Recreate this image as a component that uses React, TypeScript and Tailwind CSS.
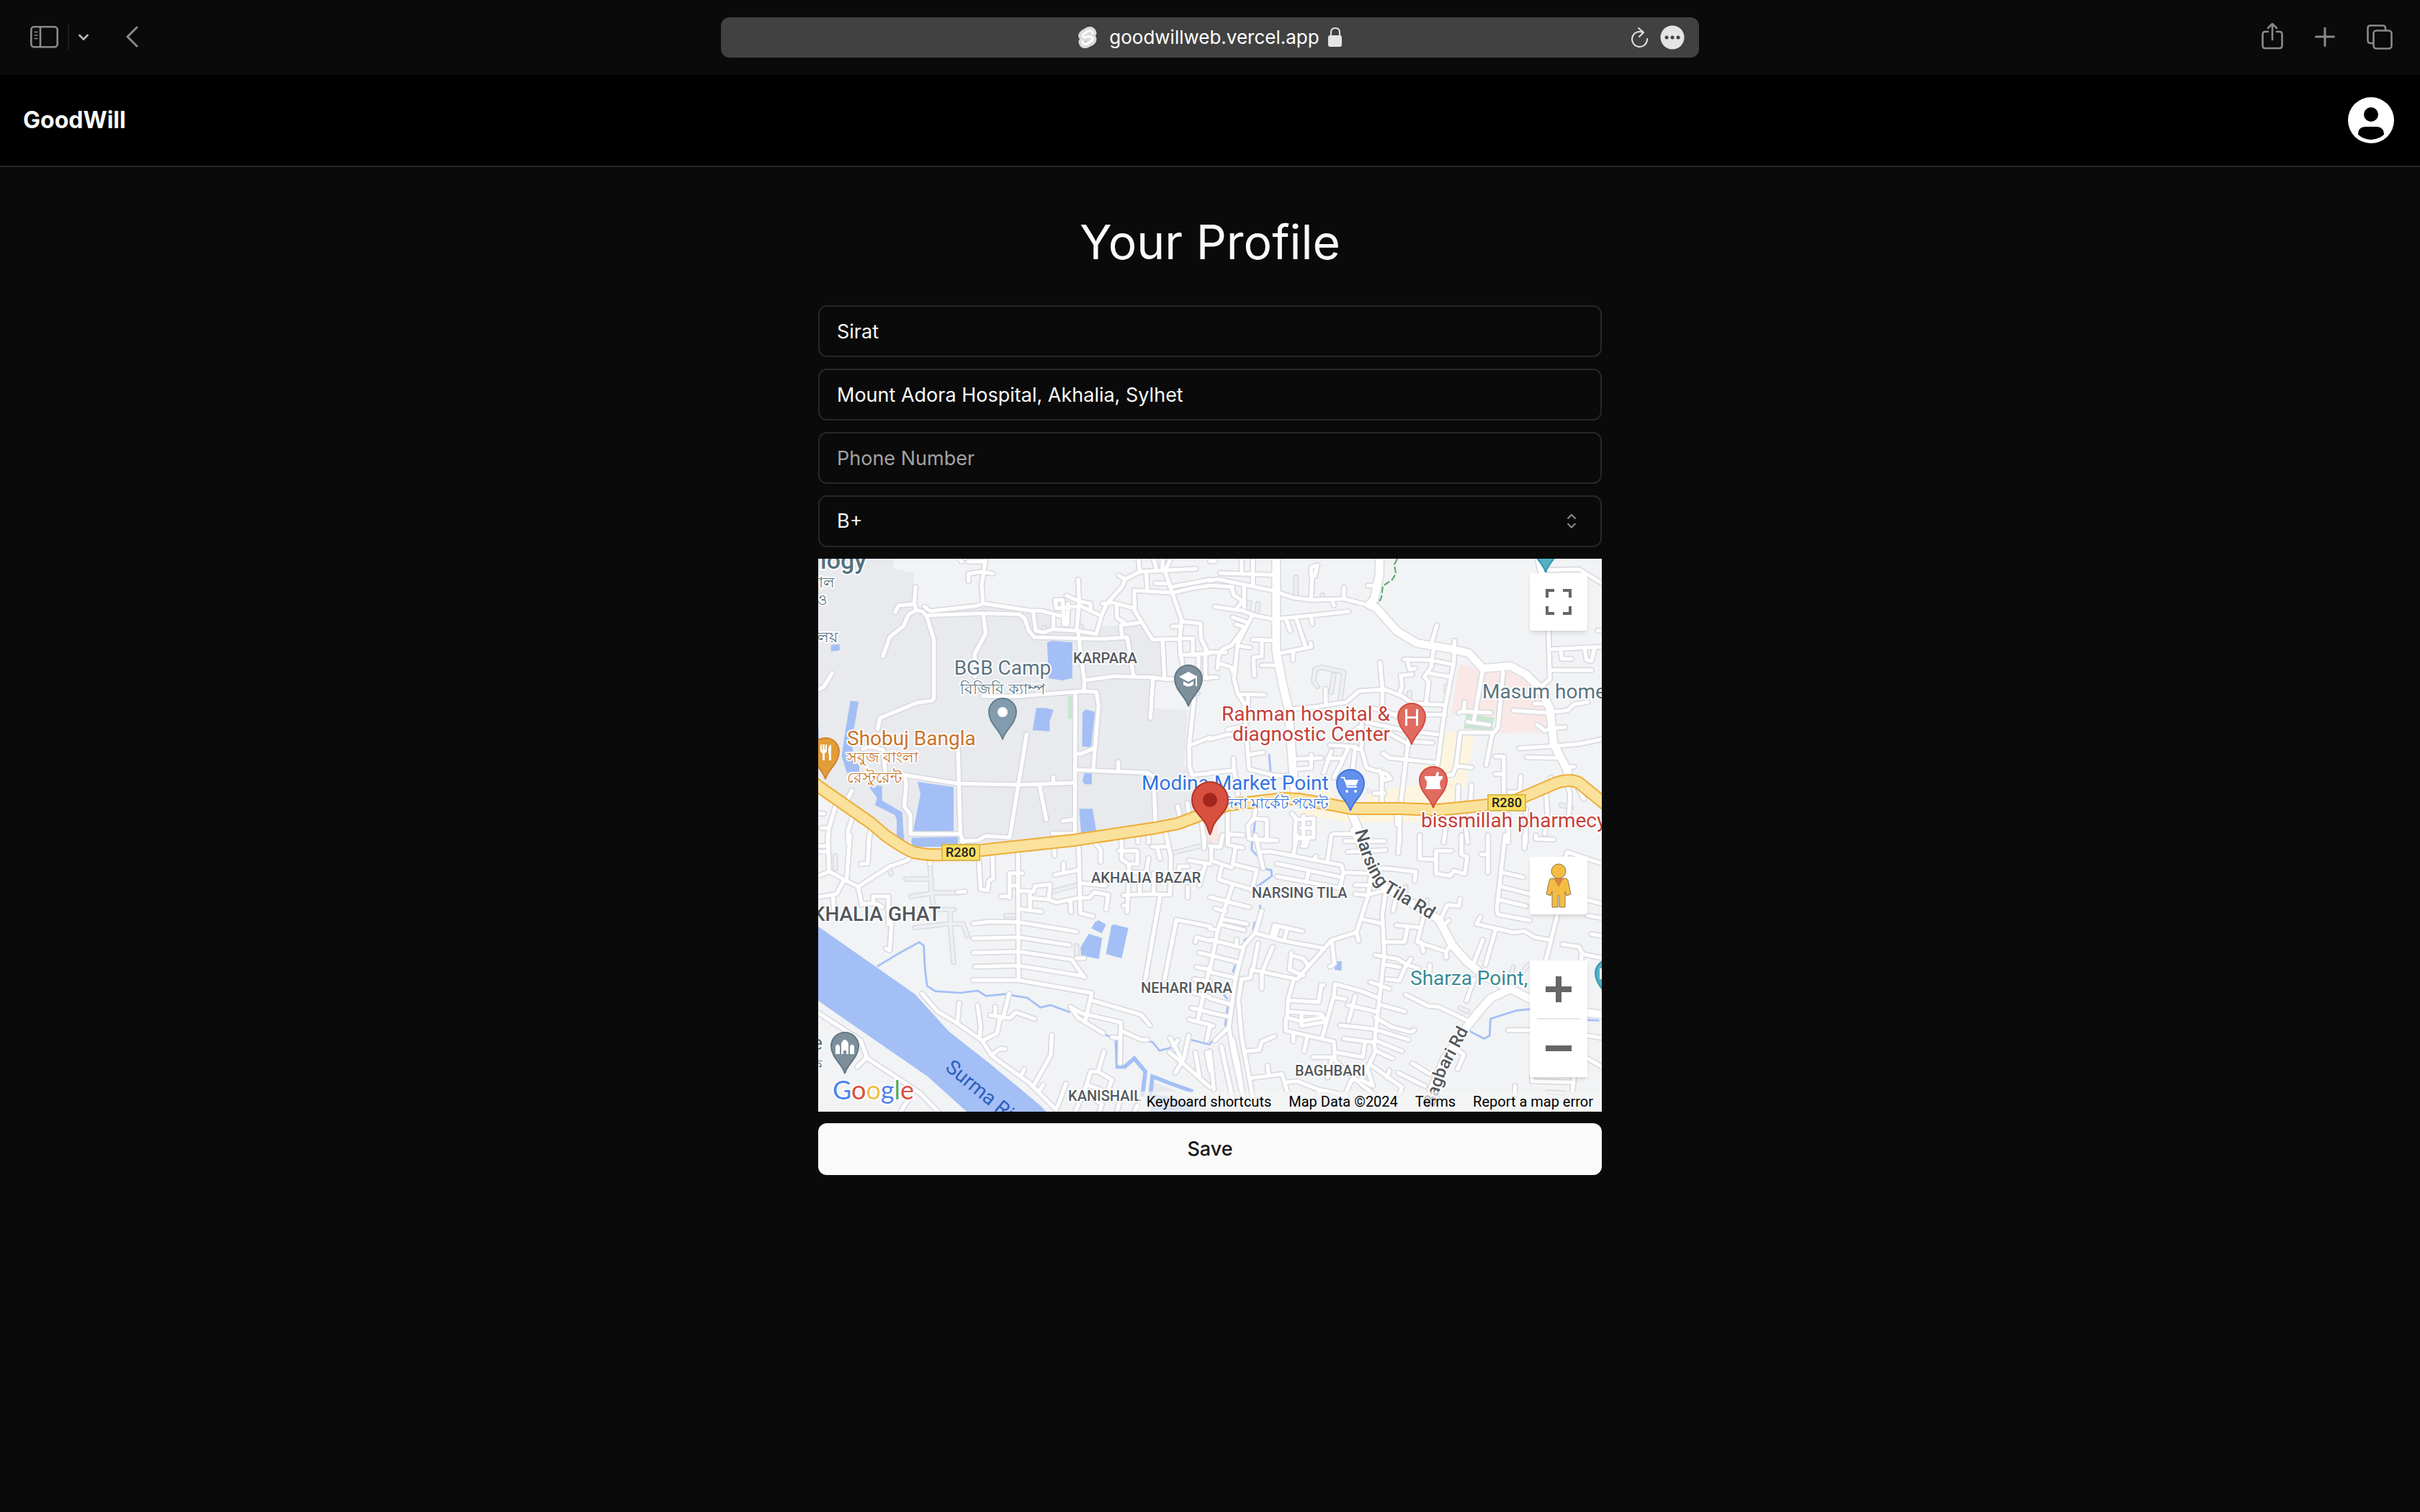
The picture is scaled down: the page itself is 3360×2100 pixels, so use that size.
import { useState } from 'react'
import type { ReactNode } from 'react'

const bloodGroups = ['A+', 'A-', 'B+', 'B-', 'AB+', 'AB-', 'O+', 'O-']

interface Tile {
  transform: string
  land?: string
  pink?: string
  sand?: string
  park?: string
  water: string
  stream?: string
  creek?: string
  faint?: string
  minor: string
  major?: string
}

// The map is cut in four tiles, each drawn in its own coordinates
const tiles: Tile[] = [
  {
    transform: 'translate(-6 -6) scale(0.3508 0.3333)',
    land: 'M17 18H315V60L397 76L392 205L460 235L660 210L860 240L950 260V315L1110 330L1140 300L1215 295L1285 290L1340 355L1380 365L1385 515L1350 535L1345 642L1480 648L1465 880L1500 920L1568 930V1080L1390 1140L760 1200H340L17 960Z',
    pink: 'M1545 1120H1568V1200H1550Z',
    park: 'M1006 590H1022V687H1006Z',
    water:
      'M923 368L940 360L1023 367V515L985 525L930 517Z M68 378L102 374V400L68 404Z M145 610L177 614L150 780L160 860L180 880V905L130 910L110 840L125 730Z M225 960L270 965V1025L350 1075L357 1200H328V1105L320 1085L242 1045L250 1015L222 975Z M410 947L553 970V1152L392 1158L422 1000Z M388 1182L570 1177V1200H385Z M880 640H918L949 648L933 695V737L866 733Z M1063 658L1078 646L1112 656L1097 803L1062 800Z M1070 912H1100V958H1072L1063 945Z M1050 1060H1103L1118 1155L1058 1163Z M17 690L22 790H17Z',
    faint: 'M912 305V325 M1058 300V320 M1505 580H1520',
    minor:
      'M577 18L585 30 M612 30H670 M680 18L664 130L670 205 M708 80L667 72L612 80V112 M402 135L398 205L405 232 M322 240L335 213L398 207 M438 218L460 236L640 215L672 205L860 235H900L990 260 M405 232L375 250L355 298L300 345L273 425 M405 232L430 238L448 262L475 355V600L467 610L408 618L262 682L252 728 M448 254L670 245L815 250L835 268L850 318L872 345L1150 352L1240 345L1265 505 M670 245L680 330L637 412V510 M1046 105L1050 190L1040 320 M1000 172L1050 195L1095 205V235 M955 190H985L990 292H1003L1006 205 M955 190L960 225L1055 215L1135 255 M868 240L878 318L910 325L945 312L1045 318L1118 332L1140 250L1160 205L1220 135L1232 103L1290 72L1512 60 M948 262V312 M1207 88L1232 103 M1285 18L1290 72 M1345 18L1355 60 M1380 18V70 M1412 18L1390 70L1415 150L1455 270L1448 350L1450 400L1465 500 M1352 120L1405 122 M1315 75L1320 150 M1268 150L1420 160L1500 140L1568 130 M1420 135L1568 105 M1268 150L1270 235L1340 355L1448 352 M1142 205L1180 200L1270 225 M1198 205L1200 265L1228 282L1215 298L1220 345 M1215 295L1285 285 M1380 360L1388 518 M1460 280L1530 288L1532 350L1555 400 M1420 300H1455 M1450 350H1500V420 M1450 420L1568 412 M1046 325L1070 525V570 M1070 525L1185 508L1340 512L1390 520L1568 515 M1342 515L1332 682 M670 590L800 592L1065 570L1118 573L1127 630L1105 900 M1035 580L1033 1175 M1040 832L1060 830L1108 808 M1040 898L1320 910L1345 925L1352 1130 M1205 865V905 M842 750L775 1180L680 1173L650 1192L585 1195 M570 800L580 1165L592 1200 M330 915L570 955L820 960L1030 952 M948 928V955 M893 962L920 1105 M985 1110L1030 1105 M945 1163H1035 M360 920L365 960L358 1050L382 1085V1165H580 M17 565L40 550L72 495 M195 810L220 800L275 815L282 900 M1505 600L1485 800L1487 885L1498 920L1568 912 M1490 795L1568 762 M1440 1050L1450 1100 M1478 1035L1485 1085 M17 1080H40 M150 985L130 1025 M85 1050L60 1140L55 1200 M30 1140H60 M155 1090L135 1150V1200 M225 1150L215 1200 M1522 420V490 M1550 400V510 M1283 1175V1200 M1217 1180V1200 M1325 1170V1200 M1390 1150L1400 1200 M1535 1115L1545 1200',
  },
  {
    transform: 'translate(544 -6) scale(0.3508 0.3333)',
    land: 'M618 970L645 980V1020H618Z',
    pink: 'M988 455L1065 480L1040 640L1010 670L955 660Z M1085 490H1150L1130 690L1050 665Z M1165 485L1230 495L1300 560L1330 640L1345 740L1140 745Z M0 1100H25L40 1200H0Z',
    sand: 'M930 737L975 740L960 890L905 880Z M1000 755H1045L1015 950L960 1040H880L700 1030V980L830 960L840 880L900 870L985 900Z M440 950L520 1040H400Z M620 1000L700 990V1040H620Z M350 1060L740 1085H830V1115L560 1118L350 1080Z',
    park: 'M1015 665L1125 680L1115 732L1003 725Z',
    water: 'M0 0Z',
    stream: 'M234 832L240 910 M178 1112L172 1175',
    faint:
      'M425 550L410 530L415 480L440 470L530 490L515 610 M490 500L480 575 M340 95V185 M155 200L150 240 M190 205L185 250 M445 170V185 M935 550V570 M790 575V600 M1390 1045L1430 1055',
    minor:
      'M0 28H20 M125 18V75 M170 18V120 M40 78L245 85 M0 110L30 103L245 150L330 180L400 190L530 185L620 210 M0 130L90 135 M530 138V180 M425 45L415 90H400V55L415 48 M405 90L400 185 M85 140L95 170L130 195L105 225 M135 130V220 M20 218L130 235L180 255L250 270L400 255L548 238 M400 258L405 290 M300 268L318 320 M340 262L380 390 M285 410L400 385L398 370 M330 405L328 440 M485 195L490 212 M625 130H650 M165 258L110 370L95 520L110 580L135 620L150 830L155 895L250 920L320 925 M90 262L140 280 M103 292L130 300 M130 315L85 380L50 395L35 420L30 475 M0 408H62 M38 455L85 470L90 490 M108 380L158 388 M170 355L250 358 M205 358V425L172 430L175 505 M205 462H265 M0 512H28 M115 582L215 585 M150 590V630 M315 645L420 635L540 615L590 570L690 562L760 590L800 620L930 628 M673 450L682 555V640 M458 560V625 M768 438L875 440L965 460 M780 440L790 480L812 475 M800 500L755 505L760 550L750 580 M885 395L875 470L848 510L865 530L855 620 M868 495L950 510 M898 295L878 365 M968 360L965 450L930 640L900 880 M640 640L700 655L790 700 M720 665L930 668 M620 700L780 735L900 750 M700 740L785 790 M800 780L880 785 M790 740L775 860L755 1040L750 1125V1200 M685 830L710 848L895 868 M1160 490L1140 720L1125 742H990 M1078 490L1045 690 M1008 615L1005 650L985 660 M1005 655L1110 660 M1020 698L1105 710 M990 745L975 880L960 918L900 925 M980 882L1035 888 M1118 745L1093 878 M1200 650L1330 660L1415 650L1440 625L1495 615 M1285 622H1330 M1295 710L1325 735L1350 725L1405 720 M1225 808L1370 798L1460 790L1551 770 M1255 845L1385 848 M1400 885H1440 M1355 395L1551 385 M1388 400L1392 435H1430 M1483 395L1490 440L1510 445L1522 390 M1355 482H1510 M1535 318H1551 M1340 65L1460 62L1551 120 M1340 320L1345 520L1300 560 M1130 842H1163V1000 M1130 915H1163 M1230 925L1225 1000 M1035 960L1030 1040 M983 965L980 1040 M1350 930V950 M1185 990H1215 M0 770L70 750L135 755 M70 730L140 715 M155 835L210 825 M93 850L95 900L0 910 M95 895L105 960L110 1000 M345 852L440 848 M400 835V890L345 895 M475 795L560 800L600 815L620 890L700 915L715 935L690 940L670 900 M480 820L450 910 M465 850H520 M545 810L520 870L490 930 M575 800L565 895 M600 700V800 M590 720L520 770 M680 920V1040 M650 995H690 M70 1070V1200 M180 1060L175 1100L150 1130L155 1185L250 1190 M175 1100L225 1105V1195 M325 1080L340 1100L335 1200 M370 1090V1200 M340 1105L410 1100V1180 M360 1140H410 M355 1180H410 M70 1165L130 1170 M740 1080V1125 M940 1085L925 1200 M1005 1085L1020 1200 M1180 1085V1200 M1250 1060V1200 M1330 985L1335 1080L1325 1165 M1450 960L1480 1020 M1415 960L1425 1000L1420 1100 M490 1165H580',
    major:
      'M262 0V400L285 530L310 640L335 990 M672 0L670 90L650 185L630 210L660 225L740 320L820 370L960 395L1025 412L1080 475L1190 465L1250 500L1300 550L1345 640L1360 790L1415 900L1418 930 M560 1075L600 1180 M1300 0L1315 70',
  },
  {
    transform: 'translate(-6 384) scale(0.3508 0.3333)',
    park: 'M345 1010L398 1050L390 1055L345 1025Z',
    land: 'M1345 1030L1500 1090L1568 1152H1330Z',
    water:
      'M17 380L400 662L535 818L700 955L895 1125L920 1152H605L450 1005L230 845L17 690Z M1098 388L1112 362L1128 355L1156 372L1140 409Z M1055 468L1088 411L1141 428L1128 516L1058 500Z M1178 375L1190 372L1245 387L1218 513L1156 495Z M388 12L570 6V48L388 50Z M330 0H357V30Z M1350 1080L1480 1110L1500 1152H1330Z',
    stream:
      'M250 547L340 490L417 446L435 460L440 560L448 628L480 650L580 657L648 648L682 670L755 662L845 678L897 718L937 708L1015 738 M1145 825L1180 845 M1320 858L1340 862L1368 898L1415 885 M1493 853L1568 873',
    creek: 'M1198 850L1202 965H1230L1268 930L1312 985L1300 1090 M1330 1100L1340 1005L1400 1030L1500 1068',
    faint:
      'M365 183H465 M460 120L465 240L475 310 M385 255L480 240H570 M540 310V370L553 530 M400 385L540 368L590 370L608 420 M480 310H555 M85 85V140 M945 235L1050 205 M760 335H808 M1415 75L1568 35 M1040 460V500 M300 140L305 160',
    minor:
      'M17 45H50 M17 68H55 M55 0L60 150L120 185L175 215L190 290 M17 170L60 152 M17 258L90 245L120 185 M75 255L80 320 M143 0L130 180 M175 215L300 130L370 105L385 85 M220 0L213 118L185 120 M235 280V255H295V370 M190 285H250L270 300 M308 360L300 480L285 472 M570 238L598 235 M460 95V120 M653 105L660 225L688 230L692 190L710 180L707 75 M808 65L810 605 M825 158H775V260 M740 255H775 M775 210H810 M815 232L870 235L875 212L935 205L930 260 M855 235V310 M818 308L900 318 M860 262L930 268L960 280L1045 262 M950 50L953 85 M1048 45L1055 325L1105 338 M955 165L1045 145 M988 118V155 M1060 200L1155 210 M1055 262L1090 260L1110 238L1165 248L1157 310 M1015 275L1018 320 M632 368L700 360L810 362L1040 402 M632 430L810 425L1012 458 M632 490L810 485L1020 518L1070 592 M638 548L810 543L1070 588 M630 604H810L1100 658L1075 770 M1040 512H1070 M1115 35L1135 60V112 M1218 15V100L1248 122 M1208 65H1280V120H1248L1240 320 M1225 293H1240 M1325 10V25 M1395 0L1413 90L1410 240 M1340 48H1400 M1360 55L1370 98 M1325 95L1315 155 M1250 155H1320 M1225 250L1340 245L1410 248 M1485 105L1568 120 M1445 130H1480 M1445 130V175 M1545 0V55 M1550 120L1525 210 M1480 215V260 M1530 155L1480 165 M1290 160V245 M1345 160V245 M1370 255L1312 600 M1568 380L1435 352L1388 600 M1510 445L1515 425L1568 440 M1525 490L1568 500 M1515 550L1568 560 M1505 600L1568 610 M1500 655L1568 675 M1495 720L1568 738 M1485 768L1568 790 M1568 545L1520 768 M1568 790L1555 855 M1015 715L1045 760L1145 825 M1015 715L1060 742L1215 780L1212 950 M1100 688L1295 748L1330 792 M1218 815L1295 852H1320 M1180 842L1212 845 M428 660L490 735L570 785L665 855L705 920L850 1030L960 1145 M575 698L568 780 M648 708L660 800L655 845 M773 660L750 755L735 770L725 825L670 855 M718 715V755 M698 750L775 762L800 738L873 765 M705 915L735 890H757 M833 975L818 1005 M942 832L938 915L872 1040 M908 1040L895 1060 M998 1035L965 1130 M1148 902L1125 985H1095L1080 1040L1035 1152 M1125 985L1180 1020L1165 1060 M1080 1040L1135 1060 M1090 1090L1140 1120L1130 1152 M1210 1110L1200 1152 M1280 1125L1270 1152 M1410 845L1460 940L1430 990 M1440 855L1425 880 M1483 835L1465 930 M1408 905L1460 950L1568 1050 M1510 905L1525 1000 M1555 905L1568 980 M17 740L185 855L210 925L172 965 M205 925L335 1015L420 1075L490 1150 M375 1100L345 1150',
  },
  {
    transform: 'translate(544 384) scale(0.3508 0.3333)',
    pink: 'M0 0H45L35 35L0 30Z',
    water: 'M497 525L522 526L520 565L493 560Z',
    stream:
      'M168 0L165 60L190 90 M215 140L242 145L245 170L185 215 M198 290V310 M178 360L170 395 M145 430L133 440 M100 540L90 572 M55 665L70 683 M70 710L60 795 M15 850L0 870 M1025 815L1085 848L1107 835L1110 765L1215 730L1266 725 M1494 770L1540 772 M950 930L930 1000L908 1065L900 1140',
    faint: 'M775 215V245 M860 270L855 300 M990 720L1020 735 M1200 550L1190 580 M1260 540L1230 580 M975 590L950 620 M1340 1070L1400 1075',
    minor:
      'M75 0L70 40L130 52 M100 55L90 120L185 145L165 230 M50 0L40 50L0 45 M5 50V105L85 135 M45 135L35 185L160 225 M180 20L265 22 M180 0L210 138 M200 70L240 68L520 125L528 155L640 160 M345 0L330 80 M480 0L465 110 M345 15L390 10L380 45H365 M418 88V100 M265 118L520 175 M265 172L515 220 M390 155L380 195 M528 155L515 215 M535 25H690 M545 70L695 62 M750 0L745 75 M830 0V98L895 102 M895 65H955 M895 65V160L950 170L965 148L1008 162L1018 90L995 80V0 M1100 0V155 M1073 80H1095 M1245 0V55 M1290 0V15L1360 18 M1168 0L1135 310L1140 330L1265 355 M1155 155L1240 175 M1155 215L1266 245 M1150 270L1250 295 M1415 70L1551 118 M1415 70L1405 95 M1494 270L1551 285 M1494 335L1551 345 M640 140L700 138L815 152L810 190 M638 160L625 255L580 405L588 440 M575 208H630 M575 245L620 250L690 230 M695 235L682 330L690 500L660 780L650 870L655 900L600 1020 M610 352L680 368 M580 405L480 438L345 600L165 560 M180 408L290 440L445 470 M483 445L492 535L475 548 M688 445H770L782 385 M738 375L835 385 M848 330L820 445L935 485L950 460 M835 445L845 485 M935 490V510 M0 258L155 300 M90 205L30 400L0 560 M20 305L60 318 M50 350L145 370 M45 372L135 395 M0 390L30 395 M0 435L130 470 M105 435V460 M0 500L115 530 M0 570L105 595 M0 680L80 705 M0 740L70 755 M205 315L180 405L135 460L100 600L75 800L20 855 M75 800L90 900L125 1065 M165 560L160 595L125 600L112 690L125 840L165 1065L175 1150 M90 850L110 950L140 1150 M45 880L90 1100 M0 900L15 1060 M0 795H12 M245 415L255 375L365 400 M270 380L258 420 M305 390L295 430 M190 450L170 560 M248 465L205 575V640 M322 490L315 560L370 585 M322 500L370 515L390 545 M332 600L310 680L305 760L360 775L440 760 M310 688L430 695L440 625H450 M310 735L440 745L455 770 M362 740V795L445 780 M300 765V815L490 860L495 940L590 1030 M330 820V860 M385 840L373 900 M445 840L490 670L495 620L600 650L670 680 M490 675L535 683 M575 670L548 775 M545 708L660 735 M680 708L770 735 M655 760L720 800L795 820L808 812 M515 792L650 808L785 852 M530 848L640 862 M655 855L760 900 M660 900L722 930 M613 865L605 925L500 905 M408 925H490 M465 1010L480 940 M655 500L740 515L780 540L825 555 M700 540L750 550 M795 515L770 555L750 605L700 600 M870 540L868 580 M635 612L710 640 M775 665L865 712L905 715L1015 770 M1045 600L1015 690 M1080 435L1045 530 M1130 395L1090 540 M1070 340L1055 370L1200 405L1245 400L1285 425L1350 438 M1375 330L1330 520 M1395 455L1460 465L1475 495L1551 512 M1470 500V520 M1510 412L1551 420 M990 265L985 295L940 290L915 345 M775 245L740 240L725 315 M945 355L925 375 M1180 812H1266 M1494 835L1551 845 M1494 930L1551 965 M1275 1005V1025L1440 1030 M1440 1005L1435 1065 M1207 1045V1080 M800 950L870 995 M745 990L850 1045 M640 960L760 1050L750 1080 M710 980L700 1010 M625 980L645 1045L600 1020H560L535 1080 M600 1040L650 1080 M960 880L1005 915L980 975 M145 900L195 895L205 860L255 838 M165 1012L285 995L305 1065 M228 960L232 1000 M300 1030L345 1025L430 1060L540 1085 M430 1065V1090',
    major:
      'M570 -20L620 90L690 215L905 350L960 460L1020 530L1090 590L1190 640L1280 690L1494 740L1560 748 M1190 640L1110 680L1060 740L1000 820L930 930L850 1130',
  },
]

const highway =
  'M-6 311L0 316L73 367L93 384Q118 402 133 408Q152 412 173 411L226 405L355 391L468 374L499 368L531 356L569 342L646 333L667 334L709 341L740 347H807L860 349L930 342L965 337L1014 316Q1040 303 1056 311L1094 342'

function Pin({ x, y, fill, stroke, children }: { x: number; y: number; fill: string; stroke: string; children?: ReactNode }) {
  return (
    <g transform={`translate(${x} ${y})`}>
      <path d="M0 38C-3 25-19 16-19 0A19 19 0 1 1 19 0C19 16 3 25 0 38Z" fill={fill} stroke={stroke} strokeWidth={2} />
      {children}
    </g>
  )
}

function RoadBadge({ x, y }: { x: number; y: number }) {
  return (
    <g transform={`translate(${x} ${y})`}>
      <rect x={1} y={1} width={52} height={22} fill="#fbdf5f" stroke="#d9b84c" strokeWidth={2} />
      <text x={27} y={18} textAnchor="middle" className="text-[18px] font-medium" fill="#202124">
        R280
      </text>
    </g>
  )
}

function MapCanvas() {
  return (
    <svg
      viewBox="0 0 1088 768"
      preserveAspectRatio="xMidYMid slice"
      className="block h-auto w-full bg-[#f1f3f5] font-[Roboto,'Noto_Sans',sans-serif]"
      role="img"
      aria-label="Map"
    >
      {tiles.map((t) => (
        <g key={t.transform} transform={t.transform}>
          <path d={t.land} fill="#e8eaee" />
          <path d={t.pink} fill="#f9e8e6" />
          <path d={t.sand} fill="#fdf5df" />
          <path d={t.park} fill="#c9e5d0" />
          <path d={t.water} fill="#a3bff5" />
          <g fill="none" stroke="#a3bff5">
            <path d={t.stream} strokeWidth={8} />
            <path d={t.creek} strokeWidth={16} />
          </g>
        </g>
      ))}

      {/* Road casings go under every road surface */}
      <g fill="none" strokeLinecap="round" strokeLinejoin="round">
        {tiles.map((t) => (
          <g key={t.transform} transform={t.transform}>
            <path d={t.faint} stroke="#dadbe0" strokeWidth={22} />
            <path d={t.faint} stroke="#eeeff2" strokeWidth={13} />
            <path d={t.minor} stroke="#dadbe0" strokeWidth={25} />
            <path d={t.major} stroke="#dadbe0" strokeWidth={40} />
          </g>
        ))}
        {tiles.map((t) => (
          <g key={t.transform} transform={t.transform} stroke="#ffffff">
            <path d={t.minor} strokeWidth={15} />
            <path d={t.major} strokeWidth={31} />
          </g>
        ))}
        <path d={highway} stroke="#eead38" strokeWidth={18} />
        <path d={highway} stroke="#fae29c" strokeWidth={14} />
      </g>
      <path
        d="M804 0L800 8L802 21L797 29L784 38L782 54L778 62"
        fill="none"
        stroke="#55a866"
        strokeWidth={2}
        strokeDasharray="9 3"
      />

      <RoadBadge x={929} y={327} />
      <RoadBadge x={171} y={396} />

      <g stroke="#ffffff" strokeWidth={4} strokeLinejoin="round" paintOrder="stroke" className="text-[28px]">
        <g fill="#54727f">
          <text x={67} y={14} textAnchor="end" className="text-[34px] font-medium">logy</text>
          <text x={23} y={40} textAnchor="end" className="text-[21px]">লাল</text>
          <text x={12} y={64} textAnchor="end" className="text-[21px]">ও</text>
          <text x={27} y={116} textAnchor="end" className="text-[21px]">লয়</text>
          <text x={6} y={682} textAnchor="end">e</text>
          <text x={6} y={710} textAnchor="end" className="text-[21px]">ক</text>
        </g>
        <g fill="#5b7482">
          <text x={256} y={161} textAnchor="middle">BGB Camp</text>
          <text x={256} y={188} textAnchor="middle" className="text-[21px]">বিজিবি ক্যাম্প</text>
          <text x={922} y={194}>Masum home</text>
        </g>
        <g fill="#c8742a">
          <text x={40} y={259}>Shobuj Bangla</text>
          <text x={40} y={283} className="text-[21px]">সবুজ বাংলা</text>
          <text x={40} y={311} className="text-[21px]">রেস্টুরেন্ট</text>
        </g>
        <g fill="#3474e0">
          <text x={449} y={321}>Modina Market Point</text>
          <text x={709} y={347} textAnchor="end" className="text-[21px]">মদিনা মার্কেট পয়েন্ট</text>
        </g>
        <g fill="#c5403a">
          <text x={794} y={225} textAnchor="end">Rahman hospital &amp;</text>
          <text x={794} y={253} textAnchor="end">diagnostic Center</text>
          <text x={837} y={373}>bissmillah pharmecy</text>
        </g>
        <text x={822} y={592} fill="#388a96">Sharza Point,</text>
        <g fill="#53575c" className="font-medium">
          <text x={170} y={503} textAnchor="end">KHALIA GHAT</text>
          <g className="text-[20px]">
            <text x={354} y={145}>KARPARA</text>
            <text x={379} y={450}>AKHALIA BAZAR</text>
            <text x={602} y={471}>NARSING TILA</text>
            <text x={448} y={603}>NEHARI PARA</text>
            <text x={662} y={718}>BAGHBARI</text>
            <text x={347} y={753}>KANISHAIL</text>
          </g>
          <g className="text-[25px]">
            <path id="narsing" d="M745 378Q760 440 784 462L872 514" fill="none" stroke="none" />
            <text>
              <textPath href="#narsing">Narsing Tila Rd</textPath>
            </text>
            <path id="bagbari" d="M855 762L871 715L910 642" fill="none" stroke="none" />
            <text className="text-[24px]">
              <textPath href="#bagbari">Bagbari Rd</textPath>
            </text>
          </g>
        </g>
      </g>
      <path id="surma" d="M175 709L290 804" fill="none" />
      <text fill="#2f5fbe" className="text-[28px]">
        <textPath href="#surma">Surma River</textPath>
      </text>

      <Pin x={256} y={213} fill="#829cae" stroke="#64808f">
        <circle r={7} fill="#fff" />
      </Pin>
      <Pin x={514} y={167} fill="#7c8f9b" stroke="#647883">
        <path d="M0-10L13-3L0 4L-13-3Z M10-2H12V10H10Z M-7 3L0 7L7 3V8Q0 13-7 8Z" fill="#fff" />
      </Pin>
      <Pin x={10} y={268} fill="#e39d38" stroke="#cf842a">
        <path d="M-7-10V-2Q-7 1-4 2V12H-1V2Q2 1 2-2V-10H0V-3H-1V-10H-4V-3H-5V-10Z M8-10Q4-8 4-2V3H5V12H8Z" fill="#fff" />
      </Pin>
      <Pin x={824} y={220} fill="#e06c61" stroke="#d14d42">
        <path d="M-9-11H-6V-1H6V-11H9V12H6V2H-6V12H-9Z" fill="#fff" />
      </Pin>
      <Pin x={739} y={312} fill="#6190ee" stroke="#4373d8">
        <path d="M-13-8H-9L-4 5H9" fill="none" stroke="#fff" strokeWidth={2} />
        <path d="M-7-5H11L8 3H-4Z" fill="#fff" />
        <circle cx={-5} cy={11} r={2} fill="#fff" />
        <circle cx={7} cy={11} r={2} fill="#fff" />
      </Pin>
      <Pin x={854} y={308} fill="#e06c61" stroke="#d14d42">
        <path d="M-12-6H3L5-12L8-11L7-6H13V-3Q6 2 11 12H-11Q-6 2-12-3Z" fill="#fff" />
      </Pin>
      <Pin x={1010} y={-19} fill="#53b1c8" stroke="#3a97ad" />
      <Pin x={1098} y={576} fill="#53b1c8" stroke="#3a97ad">
        <path d="M-13-7H-8V8H-13Z" fill="#fff" />
      </Pin>
      <Pin x={37} y={677} fill="#7c8f9b" stroke="#647883">
        <path d="M-13 11V0Q-10-5-7 0V11Z M13 11V0Q10-5 7 0V11Z M-5 11V-4Q0-14 5-4V11H2V6H-2V11Z" fill="#fff" />
      </Pin>

      {/* Selected place */}
      <g transform="translate(544 335)">
        <path d="M0 48C-3 44-2 38-8 30C-15 20-25 14-25 0A25 25 0 1 1 25 0C25 14 15 20 8 30C2 38 3 44 0 48Z" fill="#d75040" stroke="#b3352b" strokeWidth={2} />
        <circle r={10} fill="#a3261d" />
      </g>

      <text x={20} y={751} stroke="#fff" strokeWidth={4} paintOrder="stroke" className="font-[Lato,sans-serif] text-[36px]">
        <tspan fill="#4f84ee">G</tspan>
        <tspan fill="#d9503f">o</tspan>
        <tspan fill="#f0be42">o</tspan>
        <tspan fill="#4f84ee">g</tspan>
        <tspan fill="#57a65a">l</tspan>
        <tspan fill="#d9503f">e</tspan>
      </text>
    </svg>
  )
}

function MapControls() {
  const square = 'flex size-20 items-center justify-center bg-white'

  return (
    <div className="absolute top-5 right-5 bottom-12 flex flex-col justify-between">
      <button type="button" aria-label="Toggle fullscreen view" className={`${square} rounded shadow-md`}>
        <svg className="size-9" viewBox="0 0 36 36" fill="none" stroke="#666" strokeWidth={4}>
          <path d="M2 12V2H12M24 2H34V12M34 24V34H24M12 34H2V24" />
        </svg>
      </button>

      <div className="flex flex-col gap-16">
        <button type="button" aria-label="Street View" className={`${square} rounded shadow-md`}>
          <svg className="h-16 w-9" viewBox="0 0 36 64" fill="#f4bd42" stroke="#8a7650" strokeWidth={1}>
            <path d="M8 22H28Q30 22 31 25L35 44L29 46L27 40V62H19V46H17V62H9V40L7 46L1 44L5 25Q6 22 8 22Z" />
            <circle cx={18} cy={12} r={10} />
            <path d="M11 22H25L18 34Z" fill="#d98440" stroke="none" />
          </svg>
        </button>

        <div className="flex flex-col bg-white shadow-md">
          <button type="button" aria-label="Zoom in" className={square}>
            <svg className="size-9" viewBox="0 0 36 36" stroke="#666" strokeWidth={8}>
              <path d="M18 0V36M0 18H36" />
            </svg>
          </button>
          <div className="mx-2.5 h-0.5 bg-[#e6e6e6]" />
          <button type="button" aria-label="Zoom out" className={square}>
            <svg className="size-9" viewBox="0 0 36 36" stroke="#666" strokeWidth={8}>
              <path d="M0 18H36" />
            </svg>
          </button>
        </div>
      </div>
    </div>
  )
}

function MapView() {
  return (
    <div className="relative overflow-hidden">
      <MapCanvas />
      <MapControls />
      <div className="absolute right-0 bottom-0 flex h-7 items-center gap-6 bg-[#f5f5f5]/70 px-3 font-[Roboto,sans-serif] text-[20px] leading-7 text-black">
        <button type="button">Keyboard shortcuts</button>
        <span>Map Data ©2024</span>
        <a href="#terms">Terms</a>
        <a href="#report">Report a map error</a>
      </div>
    </div>
  )
}

function BrowserBar() {
  return (
    <div className="grid h-[104px] grid-cols-[1fr_minmax(0,1358px)_1fr] items-center text-[#8a8a8a]">
      <div className="flex items-center pl-[42px]">
        <button type="button" aria-label="Show sidebar">
          <svg className="h-8 w-10" viewBox="0 0 40 32" fill="none" stroke="currentColor" strokeWidth={2.6} strokeLinecap="round">
            <rect x={1.3} y={1.3} width={36.4} height={28} rx={4} />
            <path d="M14 2V29" />
            <path d="M6 8.5H10M6 13H10M6 17.5H10" strokeWidth={1.6} />
          </svg>
        </button>
        <div className="mr-3 ml-3 h-9 w-0.5 bg-[#1c1c1c]" />
        <button type="button" aria-label="Tab groups" className="text-[#b0b0b0]">
          <svg className="h-4 w-4" viewBox="0 0 16 16" fill="none" stroke="currentColor" strokeWidth={3} strokeLinecap="round" strokeLinejoin="round">
            <path d="M2.5 5L8 10.5L13.5 5" />
          </svg>
        </button>
        <button type="button" aria-label="Back" className="ml-12">
          <svg className="h-8 w-6" viewBox="0 0 24 32" fill="none" stroke="currentColor" strokeWidth={3} strokeLinecap="round" strokeLinejoin="round">
            <path d="M18 2L5 15L18 28" />
          </svg>
        </button>
      </div>

      <div className="grid h-14 grid-cols-[1fr_auto_1fr] items-center rounded-xl bg-[#414141] text-[#e4e4e4]">
        <div />
        <div className="flex items-center">
          <svg className="mr-4 h-8 w-7" viewBox="0 0 28 32" fill="none" strokeLinecap="round" strokeLinejoin="round">
            <path d="M22 10Q20 4 15 6L8 10Q4 13 7 16Q9 18 13 16L16 15Q21 14 22 18Q22 21 19 23L13 26Q7 28 6 22" stroke="#dcdcdc" strokeWidth={9} />
            <path d="M21 10Q19 5 15 7L9 11Q6 13 8 15Q10 17 13 15L16 15Q20 14 21 18Q21 20 18 22L13 25Q8 27 7 22" stroke="#fff" strokeWidth={3} />
          </svg>
          <span className="text-[26px] leading-9 text-white">goodwillweb.vercel.app</span>
          <svg className="ml-3 h-8 w-5" viewBox="0 0 20 32">
            <path d="M4 15V9Q4 3 10 3T16 9V15" fill="none" stroke="currentColor" strokeWidth={2} />
            <rect x={0} y={13} width={19} height={16} rx={3} fill="currentColor" />
          </svg>
        </div>
        <div className="flex items-center justify-end gap-4 pr-5">
          <button type="button" aria-label="Reload">
            <svg className="h-8 w-6" viewBox="0 0 24 32" fill="none" stroke="currentColor" strokeWidth={2} strokeLinecap="round" strokeLinejoin="round">
              <path d="M22 18A10.5 10.5 0 1 1 16 9" />
              <path d="M10 3L17 9L11 15" />
            </svg>
          </button>
          <button type="button" aria-label="Page menu">
            <svg className="size-[34px]" viewBox="0 0 34 34">
              <circle cx={17} cy={17} r={16.5} fill="currentColor" />
              <g fill="#414141">
                <circle cx={9} cy={17} r={2.5} />
                <circle cx={17} cy={17} r={2.5} />
                <circle cx={25} cy={17} r={2.5} />
              </g>
            </svg>
          </button>
        </div>
      </div>

      <div className="flex items-center justify-end gap-11 pr-[38px]">
        <button type="button" aria-label="Share">
          <svg className="h-10 w-[30px]" viewBox="0 0 30 40" fill="none" stroke="currentColor" strokeWidth={2.6} strokeLinecap="round" strokeLinejoin="round">
            <path d="M9 12H5Q1.5 12 1.5 16V31Q1.5 35 5 35H25Q28.5 35 28.5 31V16Q28.5 12 25 12H21" />
            <path d="M15 23V2M9 7L15 1L21 7" />
          </svg>
        </button>
        <button type="button" aria-label="New tab">
          <svg className="size-7" viewBox="0 0 28 28" fill="none" stroke="currentColor" strokeWidth={3} strokeLinecap="round">
            <path d="M14 .5V25.5M1.5 13H26.5" />
          </svg>
        </button>
        <button type="button" aria-label="Tab overview">
          <svg className="size-9" viewBox="0 0 36 36" fill="none" stroke="currentColor" strokeWidth={2.6} strokeLinejoin="round">
            <rect x={9.5} y={8.5} width={25} height={25} rx={4} />
            <path d="M9 26H5Q1.5 26 1.5 22V5Q1.5 1.5 5 1.5H22Q26 1.5 26 5V8" />
          </svg>
        </button>
      </div>
    </div>
  )
}

function Header() {
  return (
    <header className="flex h-32 items-center justify-between border-b-2 border-[#27272a] bg-black px-8">
      <a href="#home" className="text-[32px] leading-10 font-bold">
        GoodWill
      </a>
      <button type="button" aria-label="Account">
        <svg className="size-[72px]" viewBox="0 0 72 72">
          <circle cx={36} cy={36} r={32} fill="#fff" />
          <circle cx={36} cy={28} r={10} fill="#000" />
          <path d="M18 56Q18 45 29 45H43Q54 45 54 56Q46 63 36 63T18 56Z" fill="#000" />
        </svg>
      </button>
    </header>
  )
}

const fieldClass =
  'h-[72px] w-full rounded-xl border-2 border-[#27272a] bg-transparent px-6 text-[27px] text-[#fafafa] placeholder:text-[#a1a1a1] focus:outline-none'

export default function App() {
  const [name, setName] = useState('Sirat')
  const [address, setAddress] = useState('Mount Adora Hospital, Akhalia, Sylhet')
  const [phone, setPhone] = useState('')
  const [bloodGroup, setBloodGroup] = useState('B+')

  return (
    <div className="min-h-screen bg-[#0a0a0a] font-[Inter,'Liberation_Sans',sans-serif] text-[#fafafa]">
      <BrowserBar />
      <Header />

      <main className="mx-auto w-full max-w-[1088px] pt-16">
        <h1 className="mb-12 text-center text-[66px] leading-20">Your Profile</h1>

        <form className="flex flex-col gap-4" onSubmit={(e) => e.preventDefault()}>
          <input aria-label="Name" className={fieldClass} value={name} onChange={(e) => setName(e.target.value)} />
          <input aria-label="Address" className={fieldClass} value={address} onChange={(e) => setAddress(e.target.value)} />
          <input
            type="tel"
            aria-label="Phone Number"
            placeholder="Phone Number"
            className={fieldClass}
            value={phone}
            onChange={(e) => setPhone(e.target.value)}
          />
          <div className="relative">
            <select
              aria-label="Blood group"
              className={`${fieldClass} appearance-none`}
              value={bloodGroup}
              onChange={(e) => setBloodGroup(e.target.value)}
            >
              {bloodGroups.map((group) => (
                <option key={group}>{group}</option>
              ))}
            </select>
            <svg className="pointer-events-none absolute top-6 right-7 size-6 text-[#8b8b8b]" viewBox="0 0 24 24" fill="none" stroke="currentColor" strokeWidth={2}>
              <path d="M4.5 8.5L10 3L15.5 8.5M4.5 15L10 20.5L15.5 15" />
            </svg>
          </div>

          <MapView />

          <button type="submit" className="h-[72px] rounded-xl bg-[#fafafa] text-[27px] font-medium text-[#18181b]">
            Save
          </button>
        </form>
      </main>
    </div>
  )
}
